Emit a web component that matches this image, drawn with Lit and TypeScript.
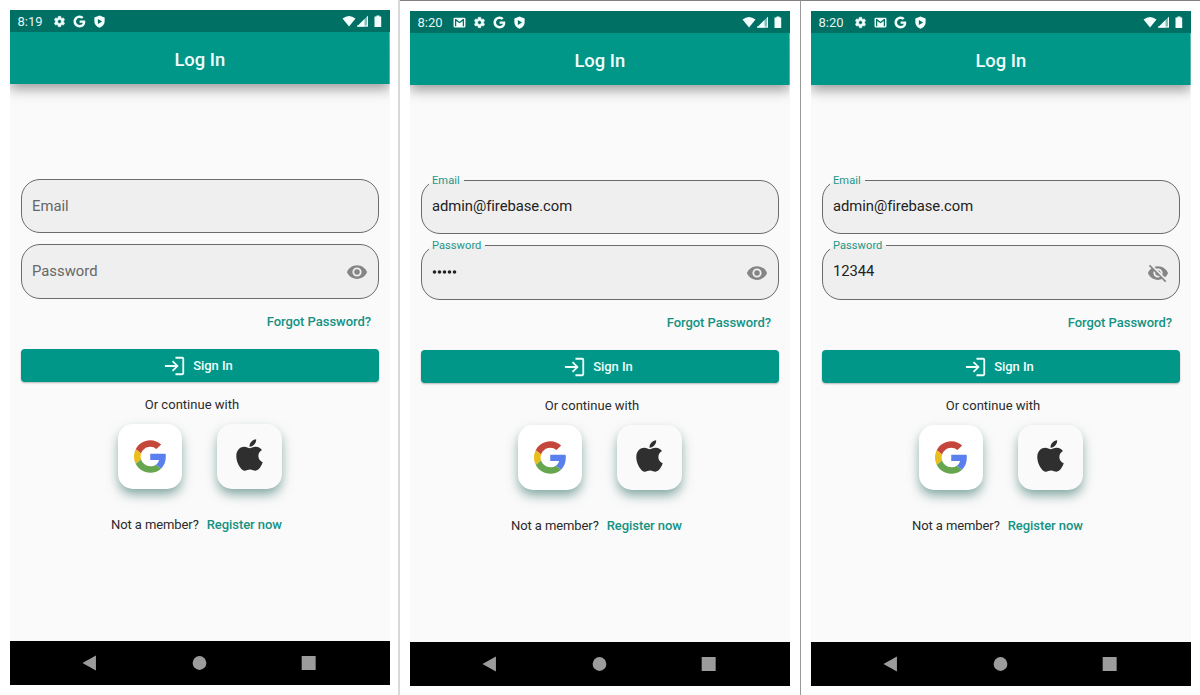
import { LitElement, html, css, svg, nothing } from "lit";
import { customElement, property } from "lit/decorators.js";

const G_PATH =
  "M12.2 10v4.3h6c-.8 2.6-2.9 4.2-6 4.2a6.5 6.5 0 1 1 4.2-11.4l3.1-3.1A11 11 0 1 0 12.2 23C20 23 23.6 17 22.4 10z";

const GLYPHS: Record<string, unknown> = {
  gear: svg`<path d="M19.14 12.94c.04-.3.06-.61.06-.94s-.02-.64-.07-.94l2.03-1.58a.49.49 0 0 0 .12-.61l-1.92-3.32a.49.49 0 0 0-.59-.22l-2.39.96c-.5-.38-1.03-.7-1.62-.94L14.4 2.81a.48.48 0 0 0-.48-.41h-3.84a.47.47 0 0 0-.47.41l-.36 2.54c-.59.24-1.13.57-1.62.94l-2.39-.96a.48.48 0 0 0-.59.22L2.74 8.87a.47.47 0 0 0 .12.61l2.03 1.58c-.05.3-.09.63-.09.94s.02.64.07.94l-2.03 1.58a.49.49 0 0 0-.12.61l1.92 3.32c.12.22.37.29.59.22l2.39-.96c.5.38 1.03.7 1.62.94l.36 2.54c.05.24.24.41.48.41h3.84c.24 0 .44-.17.47-.41l.36-2.54c.59-.24 1.13-.56 1.62-.94l2.39.96c.22.08.47 0 .59-.22l1.92-3.32a.47.47 0 0 0-.12-.61zM12 15.6a3.6 3.6 0 1 1 0-7.2 3.6 3.6 0 0 1 0 7.2z" stroke="#f3fffd" stroke-width="1"/>`,
  google: svg`<path d="${G_PATH}"/>`,
  shield: svg`<path fill-rule="evenodd" d="M12 1 2.5 4.5V12c0 5.3 4 9.6 9.5 11.5 5.5-1.9 9.5-6.2 9.5-11.5V4.5zM9 7.2l7.8 4.8L9 16.800z"/>`,
  mail: svg`<path fill-rule="evenodd" d="M3 3h18a2 2 0 0 1 2 2v14a2 2 0 0 1-2 2H3a2 2 0 0 1-2-2V5a2 2 0 0 1 2-2zm.7 16h2.300V9L12 13.500 18 9V19H20.300V5.600h-1.800L12 10.600 5.500 5.600H3.700z"/>`,
};

@customElement("status-icon")
class StatusIcon extends LitElement {
  @property() name = "gear";
  static styles = css`
    :host { display: block; width: 13px; height: 13px; }
    .glyph { display: block; width: 13px; height: 13px; fill: #f3fffd; }
  `;
  render() {
    return html`<svg class="glyph" viewBox="0 0 24 24">${GLYPHS[this.name]}</svg>`;
  }
}

@customElement("text-field")
class TextField extends LitElement {
  @property() label = "";
  @property() value = "";
  @property() eye = "";
  static styles = css`
    :host { display: block; position: relative; }
    .box {
      box-sizing: border-box; height: 100%; margin: 0; padding: 0;
      border: 1px solid #6b6b6b; border-radius: 19px; background: #efefef;
      min-width: 0; font-size: 14.8px; color: #666;
    }
    .empty { display: flex; align-items: center; padding-left: 10px; padding-bottom: 1px; }
    .empty .hint { letter-spacing: 0.02px; }
    .filled { height: calc(100% + 6px); margin-top: -6px; }
    .tag {
      margin-left: 7px; padding: 0 4px 0 3px; height: 13px; line-height: 13px;
      font-size: 11.1px; letter-spacing: 0.05px; color: #1f9687;
    }
    .value { padding-left: 10px; height: 39px; line-height: 39px; color: #222; letter-spacing: -0.04px; }
    .dots { display: flex; align-items: center; padding-left: 10px; }
    .dot { display: block; width: 25px; height: 4px; fill: #222; }
    .eye { position: absolute; right: 11.5px; top: 16.5px; width: 22px; height: 22px; fill: #858585; }
  `;
  render() {
    const masked = this.value === "*****";
    return html`
      ${this.value
        ? html`<fieldset class="box filled">
            <legend class="tag">${this.label}</legend>
            ${masked
              ? html`<div class="value dots">
                  <svg class="dot" viewBox="0 0 25 4">
                    ${[...this.value].map((_, i) => svg`<circle cx=${2.5 + i * 5} cy="2" r="1.8"/>`)}
                  </svg>
                </div>`
              : html`<div class="value">${this.value}</div>`}
          </fieldset>`
        : html`<div class="box empty"><span class="hint">${this.label}</span></div>`}
      ${this.eye
        ? html`<svg class="eye" viewBox="0 0 24 24">
            ${this.eye === "on"
              ? svg`<path d="M12 4.500C7 4.500 2.730 7.610 1 12c1.730 4.390 6 7.500 11 7.500s9.270-3.110 11-7.500c-1.730-4.390-6-7.500-11-7.500zM12 17a5 5 0 1 1 0-10 5 5 0 0 1 0 10zm0-8a3 3 0 1 0 0 6 3 3 0 0 0 0-6z"/>`
              : svg`<path d="M12 7c2.760 0 5 2.240 5 5 0 .65-.13 1.260-.36 1.830l2.920 2.920c1.510-1.260 2.700-2.890 3.430-4.750-1.730-4.390-6-7.500-11-7.500-1.400 0-2.740.25-3.980.7l2.160 2.160C10.740 7.130 11.350 7 12 7zM2 4.270l2.280 2.280.46.46C3.080 8.300 1.780 10.020 1 12c1.730 4.390 6 7.500 11 7.500 1.550 0 3.030-.3 4.380-.84l.42.42L19.730 22 21 20.730 3.270 3 2 4.270zM7.530 9.800l1.550 1.550c-.05.21-.08.43-.08.65 0 1.660 1.340 3 3 3 .22 0 .44-.03.65-.08l1.550 1.550c-.67.33-1.410.53-2.200.53-2.760 0-5-2.240-5-5 0-.79.2-1.530.53-2.200zm4.310-.78l3.150 3.150.02-.16c0-1.660-1.340-3-3-3l-.17.01z"/>`}
          </svg>`
        : nothing}
    `;
  }
}

@customElement("login-phone")
class LoginPhone extends LitElement {
  @property() time = "";
  @property({ attribute: false }) icons: string[] = [];
  @property() email = "";
  @property() password = "";
  @property() eye = "on";
  static styles = css`
    :host {
      display: flex; flex-direction: column; width: 379.600px; height: 675px;
      background: #fafafa; font-family: Roboto, sans-serif;
    }
    .status {
      height: 22px; box-sizing: border-box; background: #006f64; color: #e6f5f3;
      display: flex; align-items: center; padding: 0 7px 0 7.500px;
    }
    .time { width: 35px; font-size: 13px; letter-spacing: 0; line-height: 22px; padding-top: 2px; }
    .icons { display: flex; gap: 7.300px; flex: 1; }
    .system { display: block; width: 41px; height: 14px; fill: #f3fffd; }
    .bar {
      height: 52px; background: #009688; color: #f1fffd; text-align: center;
      line-height: 55px; font-size: 18.4px; font-weight: 500; letter-spacing: 0;
      box-shadow: 0 5px 12px rgba(0, 0, 0, 0.38); clip-path: inset(0 0 -25px 0);
    }
    .body { flex: 1; padding: 95px 10.600px 0 11px; display: flex; flex-direction: column; }
    .email { height: 54px; }
    .password { height: 55px; margin-top: 11px; }
    .forgot {
      text-align: right; padding-right: 8px; margin-top: 12px; height: 20px; line-height: 21px;
      font-size: 13px; font-weight: 500; color: #149283; letter-spacing: -0.04px;
    }
    .button {
      margin-top: 18px; height: 33px; border-radius: 4px; background: #009688; color: #effffc;
      display: flex; align-items: center; justify-content: center; gap: 7px; padding-right: 3px;
      font-size: 13px; font-weight: 500; letter-spacing: -0.04px; box-shadow: 0 1px 2px rgba(0, 0, 0, 0.28);
    }
    .enter { width: 22px; height: 22px; fill: #effffc; }
    .or {
      margin-top: 12px; height: 20px; line-height: 21px; text-align: center; padding-right: 16px;
      font-size: 13px; color: #2a2a2a; letter-spacing: 0.02px;
    }
    .socials { margin-top: 10px; display: flex; justify-content: center; gap: 35px; padding-right: 0.500px; }
    .card {
      width: 64.500px; height: 65px; border-radius: 15px; background: #fff;
      display: flex; align-items: center; justify-content: center;
      box-shadow: 0 6px 12px -1px rgba(0, 77, 64, 0.5);
    }
    .soft { background: #fafafa; }
    .logo { width: 32.500px; height: 33px; display: block; }
    .apple { width: 27px; height: 36px; display: block; fill: #2f2f2f; margin-bottom: 4px; }
    .member {
      margin-top: 25px; height: 20px; line-height: 21px; display: flex; justify-content: center; gap: 8px;
      padding-right: 7px; font-size: 13px; color: #2a2a2a;
    }
    .ask { letter-spacing: -0.1px; }
    .register { color: #149283; font-weight: 500; letter-spacing: -0.06px; }
    .nav { height: 44px; background: #000; display: block; fill: #9c9c9c; width: 100%; }
  `;
  render() {
    return html`
      <div class="status">
        <span class="time">${this.time}</span>
        <div class="icons">${this.icons.map((n) => html`<status-icon name=${n}></status-icon>`)}</div>
        <svg class="system" viewBox="0 0 41 14">
          <path d="M.5 4.500Q7 -.5 13.500 4.500L7 12.500z" />
          <path d="M26 1.500V12.500H15z" opacity=".55" />
          <path d="M22.500 5V12.500H15z" /><path d="M25 2.500h1v10h-1zM15 12.500v-1h11v1z" />
          <path d="M34.500 1.500h3v1h1.700v10.500h-6.700v-10.500h2z" />
        </svg>
      </div>
      <div class="bar">Log In</div>
      <div class="body">
        <text-field class="email" label="Email" value=${this.email}></text-field>
        <text-field class="password" label="Password" value=${this.password} eye=${this.eye}></text-field>
        <div class="forgot">Forgot Password?</div>
        <div class="button">
          <svg class="enter" viewBox="0 0 24 24">
            <path d="M12.500 2H20a2 2 0 0 1 2 2v16a2 2 0 0 1-2 2h-7.500v-2H20V4h-7.500zM1 11h11.200L8.600 7.400 10 6l6 6-6 6-1.400-1.400L12.200 13H1z" />
          </svg>
          <span>Sign In</span>
        </div>
        <div class="or">Or continue with</div>
        <div class="socials">
          <div class="card">
            <svg class="logo" viewBox="0 0 48 48">
              <path fill="#c5473c" d="M24 9.500c3.540 0 6.710 1.220 9.210 3.600l6.850-6.850C35.900 2.380 30.470 0 24 0 14.620 0 6.510 5.380 2.560 13.220l7.980 6.190C12.430 13.720 17.740 9.500 24 9.500z" />
              <path fill="#5a7fee" d="M46.980 24.550c0-1.570-.15-3.090-.38-4.550H24v9.020h12.940c-.58 2.960-2.260 5.480-4.780 7.180l7.730 6c4.510-4.180 7.090-10.360 7.090-17.650z" />
              <path fill="#e9bd1c" d="M10.530 28.590c-.48-1.450-.76-2.990-.76-4.590s.27-3.140.76-4.590l-7.980-6.190C.92 16.460 0 20.120 0 24c0 3.880.92 7.540 2.560 10.780l7.970-6.190z" />
              <path fill="#65a64f" d="M24 48c6.480 0 11.930-2.130 15.890-5.810l-7.730-6c-2.150 1.450-4.920 2.300-8.160 2.300-6.260 0-11.570-4.220-13.470-9.910l-7.980 6.190C6.510 42.620 14.620 48 24 48z" />
            </svg>
          </div>
          <div class="card soft">
            <svg class="apple" viewBox="0 0 384 512" preserveAspectRatio="none">
              <path d="M318.700 268.700c-.2-36.700 16.400-64.400 50-84.800-18.800-26.900-47.200-41.700-84.700-44.600-35.500-2.800-74.300 20.700-88.500 20.700-15 0-49.400-19.700-76.400-19.700C63.300 141.200 4 184.800 4 273.500q0 39.300 14.400 81.200c12.800 36.700 59 126.700 107.200 125.200 25.200-.6 43-17.900 75.800-17.900 31.800 0 48.300 17.900 76.400 17.900 48.600-.7 90.400-82.500 102.600-119.300-65.200-30.700-61.700-90-61.700-91.900zm-56.600-164.200c27.300-32.400 24.800-61.900 24-72.500-24.100 1.400-52 16.400-67.900 34.900-17.500 19.800-27.800 44.300-25.600 71.900 26.100 2 49.900-11.400 69.500-34.300z" />
            </svg>
          </div>
        </div>
        <div class="member"><span class="ask">Not a member?</span><span class="register">Register now</span></div>
      </div>
      <svg class="nav" viewBox="0 0 380 44">
        <path d="M72.500 22 86 14.500v15z" /><circle cx="189.700" cy="22" r="6.900" />
        <rect x="292" y="15" width="14" height="14" rx=".6" />
      </svg>
    `;
  }
}

@customElement("app-root")
class AppRoot extends LitElement {
  static styles = css`
    :host { display: block; }
    .sheet { display: grid; grid-template-columns: 400px 400px 400px; height: 695px; background: #fff; overflow: hidden; }
    .pane { box-sizing: border-box; padding: 10px 0 0 10px; }
    .first { border-right: 2px solid #d9d9d9; }
    .second { border-top: 1px solid #857f85; }
    .third { border-top: 1px solid #857f85; border-left: 1px solid #999; }
  `;
  render() {
    return html`<div class="sheet">
      <div class="pane first">
        <login-phone time="8:19" .icons=${["gear", "google", "shield"]}></login-phone>
      </div>
      <div class="pane second">
        <login-phone time="8:20" .icons=${["mail", "gear", "google", "shield"]} email="admin@firebase.com" password="*****"></login-phone>
      </div>
      <div class="pane third">
        <login-phone time="8:20" .icons=${["gear", "mail", "google", "shield"]} email="admin@firebase.com" password="12344" eye="off"></login-phone>
      </div>
    </div>`;
  }
}
